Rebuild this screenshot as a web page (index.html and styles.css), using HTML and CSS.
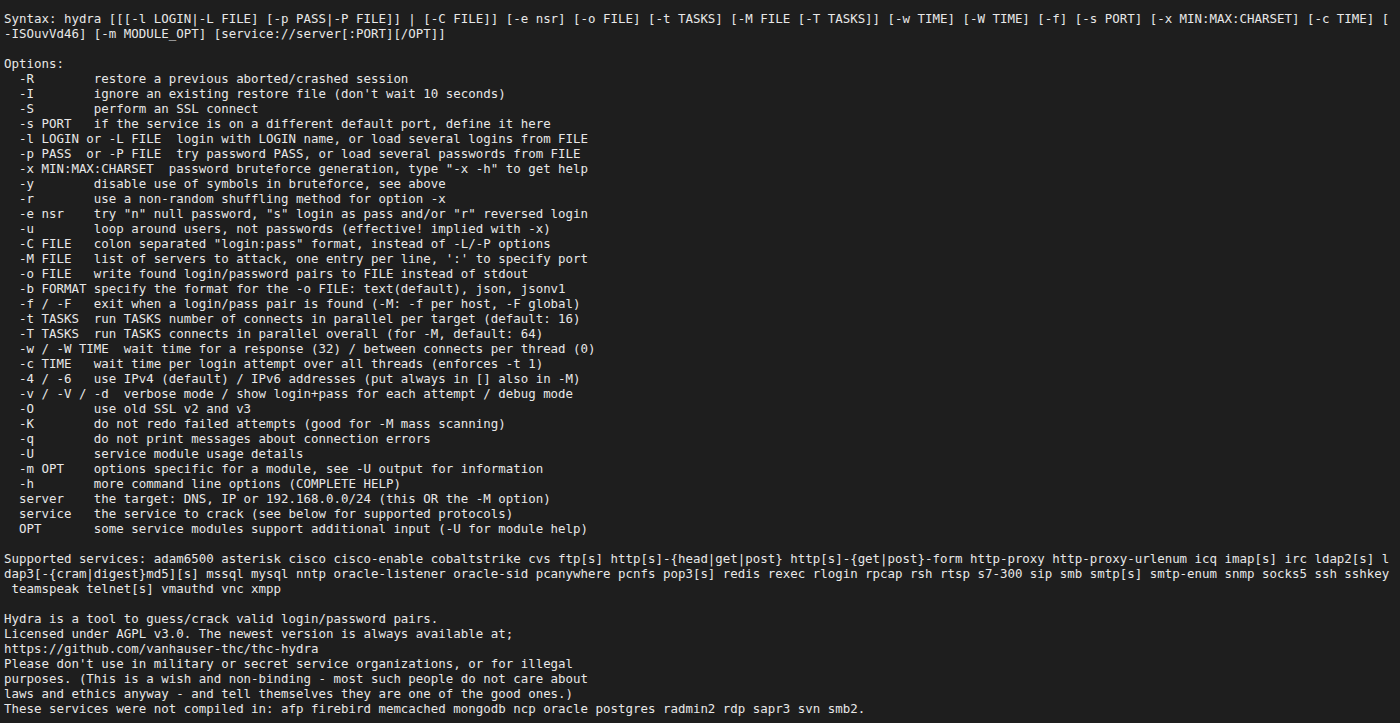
FILE: index.html
```html
<!DOCTYPE html>
<html>
<head>
<meta charset="utf-8">
<link rel="stylesheet" href="styles.css">
</head>
<body class="term">
<pre class="out">Syntax: hydra [[[-l LOGIN|-L FILE] [-p PASS|-P FILE]] | [-C FILE]] [-e nsr] [-o FILE] [-t TASKS] [-M FILE [-T TASKS]] [-w TIME] [-W TIME] [-f] [-s PORT] [-x MIN:MAX:CHARSET] [-c TIME] [
-ISOuvVd46] [-m MODULE_OPT] [service://server[:PORT][/OPT]]

Options:
  -R        restore a previous aborted/crashed session
  -I        ignore an existing restore file (don't wait 10 seconds)
  -S        perform an SSL connect
  -s PORT   if the service is on a different default port, define it here
  -l LOGIN or -L FILE  login with LOGIN name, or load several logins from FILE
  -p PASS  or -P FILE  try password PASS, or load several passwords from FILE
  -x MIN:MAX:CHARSET  password bruteforce generation, type "-x -h" to get help
  -y        disable use of symbols in bruteforce, see above
  -r        use a non-random shuffling method for option -x
  -e nsr    try "n" null password, "s" login as pass and/or "r" reversed login
  -u        loop around users, not passwords (effective! implied with -x)
  -C FILE   colon separated "login:pass" format, instead of -L/-P options
  -M FILE   list of servers to attack, one entry per line, ':' to specify port
  -o FILE   write found login/password pairs to FILE instead of stdout
  -b FORMAT specify the format for the -o FILE: text(default), json, jsonv1
  -f / -F   exit when a login/pass pair is found (-M: -f per host, -F global)
  -t TASKS  run TASKS number of connects in parallel per target (default: 16)
  -T TASKS  run TASKS connects in parallel overall (for -M, default: 64)
  -w / -W TIME  wait time for a response (32) / between connects per thread (0)
  -c TIME   wait time per login attempt over all threads (enforces -t 1)
  -4 / -6   use IPv4 (default) / IPv6 addresses (put always in [] also in -M)
  -v / -V / -d  verbose mode / show login+pass for each attempt / debug mode
  -O        use old SSL v2 and v3
  -K        do not redo failed attempts (good for -M mass scanning)
  -q        do not print messages about connection errors
  -U        service module usage details
  -m OPT    options specific for a module, see -U output for information
  -h        more command line options (COMPLETE HELP)
  server    the target: DNS, IP or 192.168.0.0/24 (this OR the -M option)
  service   the service to crack (see below for supported protocols)
  OPT       some service modules support additional input (-U for module help)

Supported services: adam6500 asterisk cisco cisco-enable cobaltstrike cvs ftp[s] http[s]-{head|get|post} http[s]-{get|post}-form http-proxy http-proxy-urlenum icq imap[s] irc ldap2[s] l
dap3[-{cram|digest}md5][s] mssql mysql nntp oracle-listener oracle-sid pcanywhere pcnfs pop3[s] redis rexec rlogin rpcap rsh rtsp s7-300 sip smb smtp[s] smtp-enum snmp socks5 ssh sshkey
 teamspeak telnet[s] vmauthd vnc xmpp

Hydra is a tool to guess/crack valid login/password pairs.
Licensed under AGPL v3.0. The newest version is always available at;
https://github.com/vanhauser-thc/thc-hydra
Please don't use in military or secret service organizations, or for illegal
purposes. (This is a wish and non-binding - most such people do not care about
laws and ethics anyway - and tell themselves they are one of the good ones.)
These services were not compiled in: afp firebird memcached mongodb ncp oracle postgres radmin2 rdp sapr3 svn smb2.</pre>
</body>
</html>
```

FILE: styles.css
```css
html, body {
  margin: 0;
  padding: 0;
  background: #1e1e1e;
  height: 100%;
  overflow: hidden;
}
.term {
  padding: 11px 4px 0 4px;
  box-sizing: border-box;
}
.out {
  margin: 0;
  font-family: "DejaVu Sans Mono", "Liberation Mono", monospace;
  font-size: 12.45px;
  line-height: 15px;
  color: #e8e8e8;
  white-space: pre;
}
```
